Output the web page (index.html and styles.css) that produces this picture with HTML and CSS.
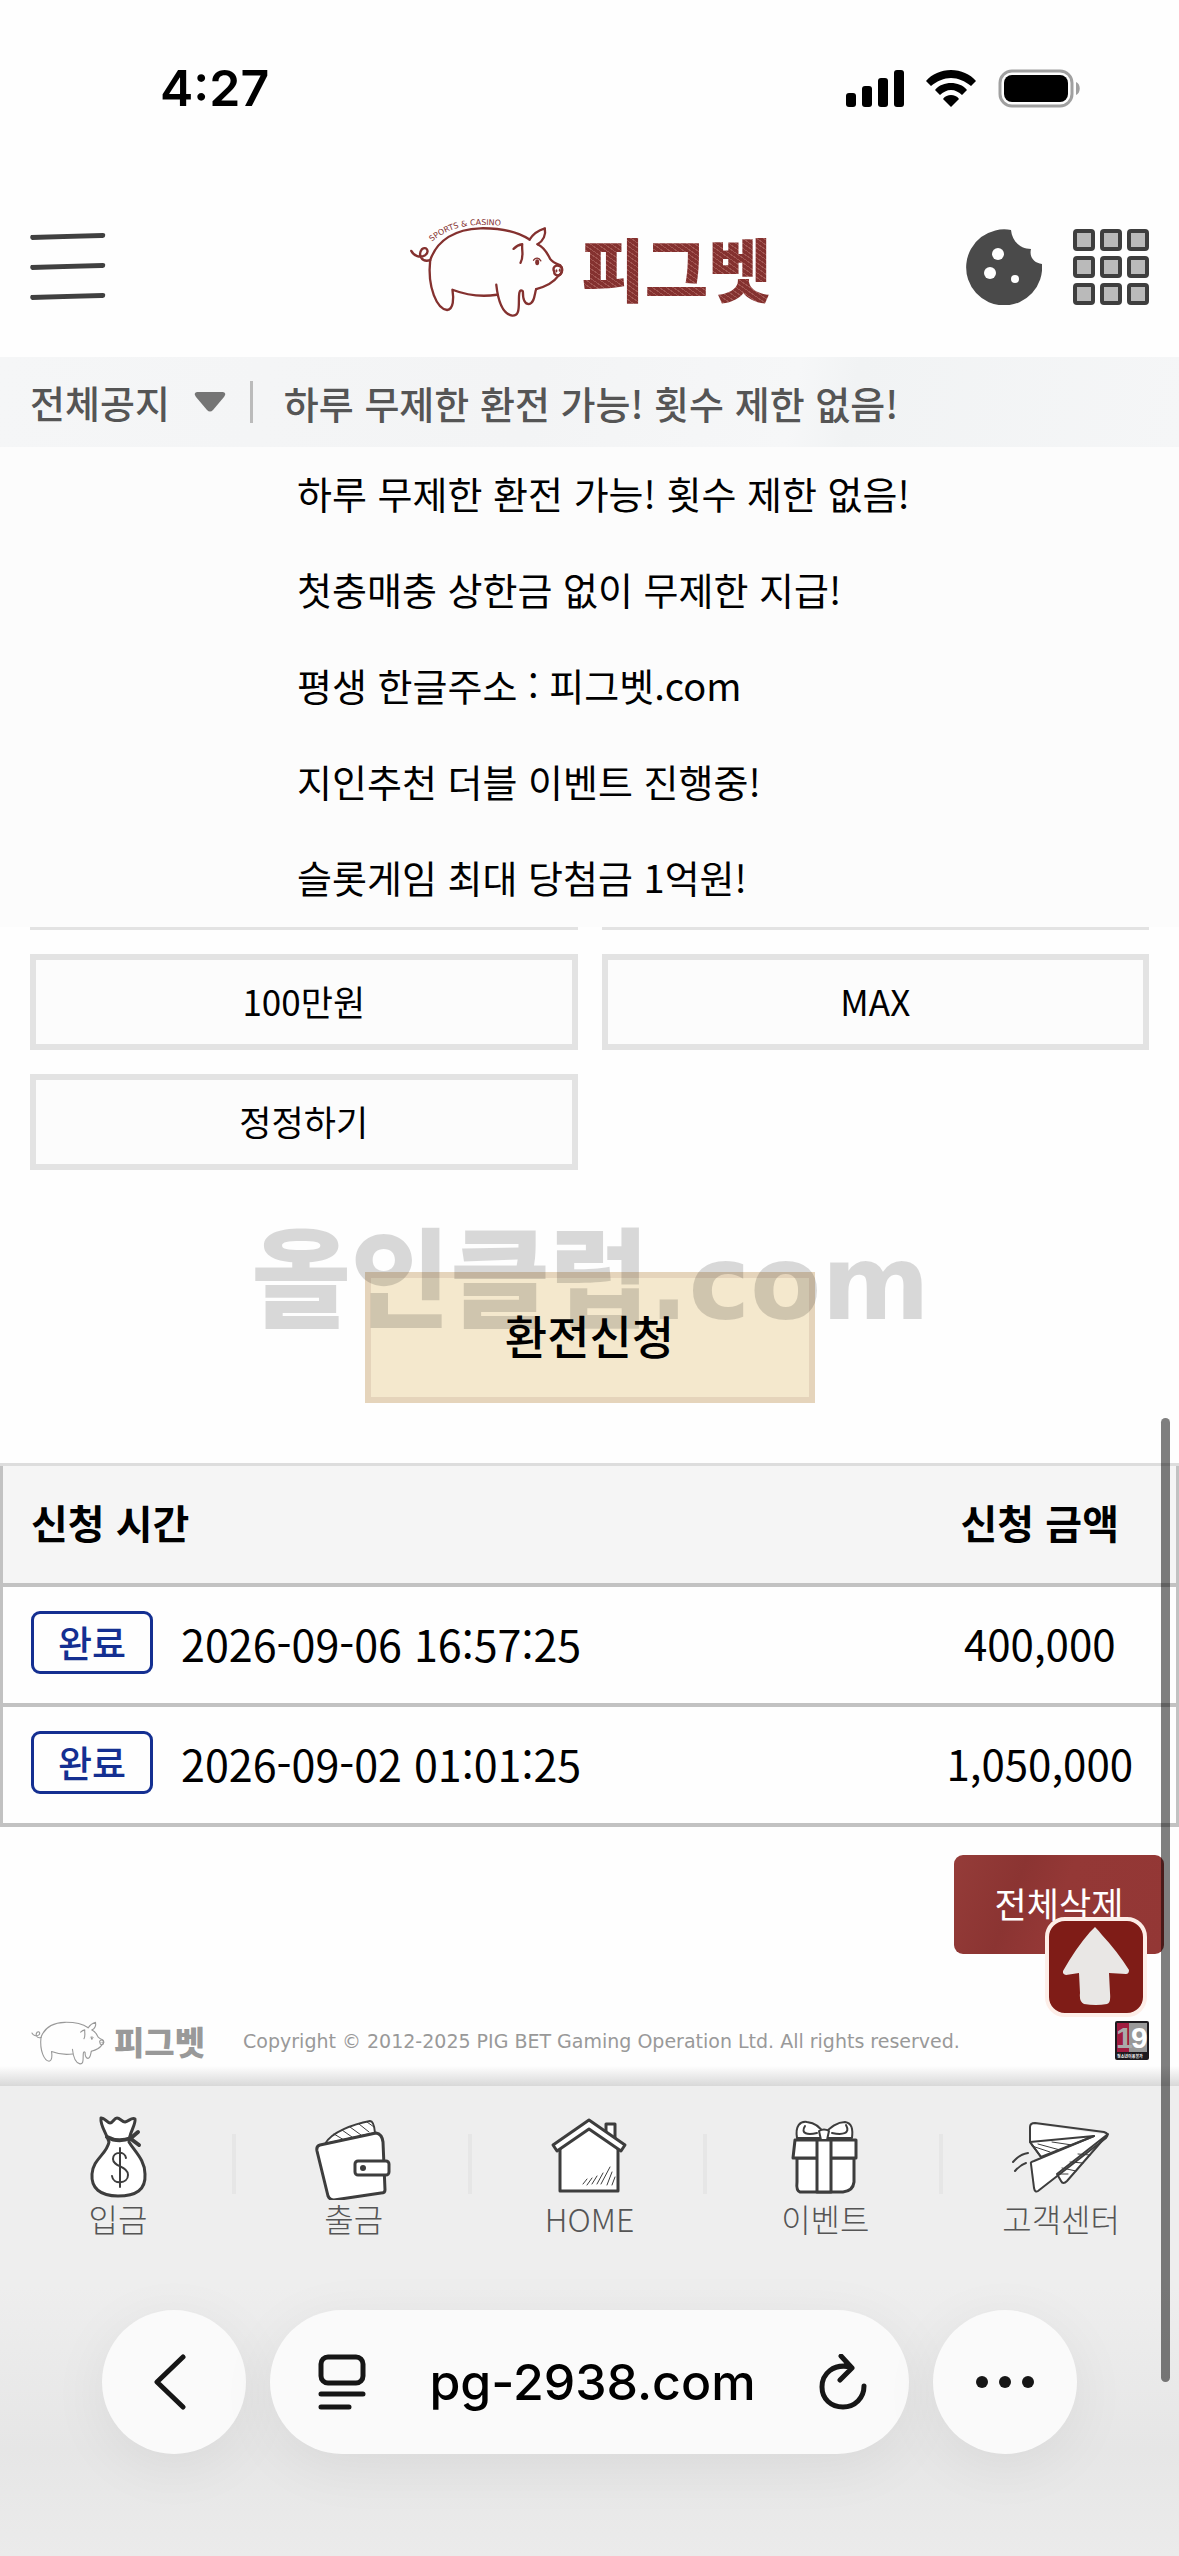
FILE: index.html
```html
<!DOCTYPE html>
<html lang="ko">
<head>
<meta charset="UTF-8" />
<meta name="viewport" content="width=device-width, initial-scale=1" />
<title>피그벳 - 환전신청</title>
<link rel="stylesheet" href="styles.css">
</head>
<body>

<svg class="sprite" aria-hidden="true">
  <symbol id="pig" viewBox="50 40 480 310">
    <g fill="none" stroke="currentColor" stroke-width="7" stroke-linecap="round" stroke-linejoin="round">
      <path d="M119 176C140 115 195 82 270 80C330 79 385 92 418 114" />
      <path d="M418 114C428 98 444 86 464 80C468 99 460 118 442 128" />
      <path d="M442 128C466 139 472 158 480 172C488 183 500 187 510 191C519 199 518 215 504 224C492 241 468 255 438 263" />
      <path d="M438 263C433 275 434 306 416 308C402 308 398 292 398 270C386 258 386 282 386 300C386 328 384 344 366 343C340 338 324 305 318 250" />
      <path d="M320 280C280 286 230 282 186 265C190 290 190 324 170 326C140 322 110 260 119 176" />
      <path d="M119 176C92 184 82 158 94 143C108 132 118 150 104 161C88 170 70 164 62 148" />
      <path d="M370 142C380 132 388 129 396 128C394 150 402 162 391 184" />
      <path d="M492 210C486 198 496 189 506 193C521 196 519 220 502 222C495 221 492 215 492 210Z" />
      <path d="M430 176C437 167 446 168 452 178" stroke-width="4" />
    </g>
    <g fill="currentColor">
      <ellipse cx="441" cy="182" rx="6" ry="9" />
      <ellipse cx="499" cy="208" rx="3" ry="5" />
      <ellipse cx="509" cy="206" rx="3" ry="5" />
    </g>
  </symbol>
</svg>

<div class="status-bar">
  <time class="clock">4:27</time>
  <div class="status-icons">
    <svg width="58" height="37" viewBox="0 0 58 37">
      <rect x="0" y="23" width="10" height="14" rx="3" />
      <rect x="16" y="16" width="10" height="21" rx="3" />
      <rect x="32" y="8" width="10" height="29" rx="3" />
      <rect x="48" y="0" width="10" height="37" rx="3" />
    </svg>
    <svg width="50" height="37" viewBox="0 0 50 37">
      <path d="M25 0C35 0 44 4 50 11L45 16C39 11 32 8 25 8S11 11 5 16L0 11C6 4 15 0 25 0Z" />
      <path d="M25 13C31 13 37 15 41 20L36 25C33 22 29 20 25 20S17 22 14 25L9 20C13 15 19 13 25 13Z" />
      <path d="M25 25C28 25 31 26 33 29L25 37L17 29C19 26 22 25 25 25Z" />
    </svg>
    <svg width="83" height="39" viewBox="0 0 83 39">
      <rect x="2" y="2" width="72" height="35" rx="12" fill="none" stroke="#a0a0a0" stroke-width="3" />
      <rect x="6" y="6" width="64" height="27" rx="8" />
      <path d="M78 13C83 15 83 24 78 26Z" fill="#a0a0a0" />
    </svg>
  </div>
</div>

<header class="site-header">
  <button type="button" class="icon-btn" aria-label="메뉴">
    <svg width="76" height="69" viewBox="0 0 76 69" fill="#404040">
      <path d="M1 3Q38 2 73 1Q76 1 75 4Q75 6 71 6Q30 7 2 8Q-1 6 1 3Z" />
      <path d="M1 33Q38 32 73 31Q76 31 75 34Q75 36 71 36Q30 37 2 38Q-1 36 1 33Z" />
      <path d="M1 63Q38 62 73 61Q76 61 75 64Q75 66 71 66Q30 67 2 68Q-1 66 1 63Z" />
    </svg>
  </button>
  <a href="#" class="logo">
    <svg class="logo-pig" viewBox="50 40 480 310">
      <use href="#pig" x="50" y="40" width="480" height="310" />
      <path id="pig-back" fill="none" d="M124 121C170 82 220 70 275 70C300 70 330 71 370 76" />
      <text class="pig-caption"><textPath href="#pig-back">SPORTS &amp; CASINO</textPath></text>
    </svg>
    <span class="logo-text">피그벳</span>
  </a>
  <div class="header-right">
    <button type="button" class="icon-btn" aria-label="쿠키">
      <svg width="76" height="76" viewBox="0 0 76 76">
        <path fill="#4a4a4a" d="M45 1C46 12 54 20 65 20C63 28 68 34 76 35A38 38 0 1 1 45 1Z" />
        <g fill="#fff"><circle cx="32" cy="25" r="6" /><circle cx="24" cy="44" r="6" /><circle cx="49" cy="50" r="4" /></g>
      </svg>
    </button>
    <button type="button" class="icon-btn" aria-label="전체 메뉴">
      <svg width="76" height="76" viewBox="0 0 76 76" fill="#bababa" stroke="#3e3e3e" stroke-width="4">
        <rect x="2" y="2" width="18" height="18" rx="2" /><rect x="29" y="2" width="18" height="18" rx="2" /><rect x="56" y="2" width="18" height="18" rx="2" />
        <rect x="2" y="29" width="18" height="18" rx="2" /><rect x="29" y="29" width="18" height="18" rx="2" /><rect x="56" y="29" width="18" height="18" rx="2" />
        <rect x="2" y="56" width="18" height="18" rx="2" /><rect x="29" y="56" width="18" height="18" rx="2" /><rect x="56" y="56" width="18" height="18" rx="2" />
      </svg>
    </button>
  </div>
</header>

<section class="notice-bar">
  <button type="button" class="notice-toggle">
    전체공지
    <svg width="32" height="20" viewBox="0 0 32 20"><path fill="#757575" d="M3 0H29Q33 1 30 5L19 18Q16 21 13 18L2 5Q-1 1 3 0Z" /></svg>
  </button>
  <span class="notice-title">하루 무제한 환전 가능! 횟수 제한 없음!</span>
</section>

<ul class="notice-list">
  <li><a href="#">하루 무제한 환전 가능! 횟수 제한 없음!</a></li>
  <li><a href="#">첫충매충 상한금 없이 무제한 지급!</a></li>
  <li><a href="#">평생 한글주소 : 피그벳.com</a></li>
  <li><a href="#">지인추천 더블 이벤트 진행중!</a></li>
  <li><a href="#">슬롯게임 최대 당첨금 1억원!</a></li>
</ul>

<main>
  <form class="exchange-form">
    <div class="amount-grid">
      <div class="amount-edge"></div>
      <div class="amount-edge"></div>
      <button type="button" class="amount-btn">100만원</button>
      <button type="button" class="amount-btn">MAX</button>
      <button type="button" class="amount-btn">정정하기</button>
    </div>
    <div class="submit-row">
      <button type="button" class="submit-btn"><span>환전신청</span></button>
      <div class="watermark">올인클럽<span>.com</span></div>
    </div>
  </form>

  <table class="history">
    <thead>
      <tr><th>신청 시간</th><th class="amount">신청 금액</th></tr>
    </thead>
    <tbody>
      <tr>
        <td><div class="when"><span class="badge">완료</span>2026-09-06 16:57:25</div></td>
        <td class="amount">400,000</td>
      </tr>
      <tr>
        <td><div class="when"><span class="badge">완료</span>2026-09-02 01:01:25</div></td>
        <td class="amount">1,050,000</td>
      </tr>
    </tbody>
  </table>

  <div class="actions">
    <button type="button" class="delete-btn">전체삭제</button>
    <a href="#" class="top-btn" aria-label="맨 위로">
      <svg width="66" height="80" viewBox="0 0 66 80"><path fill="#e9e7e5" d="M32 0Q36 4 39 8Q54 24 66 43Q66 47 63 47L46 46L47 66Q48 76 44 77Q33 79 21 77Q16 75 17 66L16 46L3 48Q-1 47 0 44Q13 21 27 5Z" /></svg>
    </a>
  </div>
</main>

<footer class="site-footer">
  <div class="logo-small">
    <svg class="small-pig"><use href="#pig" /></svg>
    <span>피그벳</span>
  </div>
  <small class="copyright">Copyright © 2012-2025 PIG BET Gaming Operation Ltd. All rights reserved.</small>
  <svg class="adult-mark" width="34" height="39" viewBox="0 0 34 39">
    <rect width="34" height="39" rx="2" fill="#1d1a1e" />
    <rect x="2" y="2" width="15" height="29" fill="#a01c40" />
    <rect x="14" y="2" width="18" height="29" fill="#999" />
    <text class="adult-num" x="1" y="27" fill="#aaa">1</text>
    <text class="adult-num" x="16" y="27" fill="#fff">9</text>
    <text class="adult-note" x="2" y="37" fill="#fff">청소년이용불가</text>
  </svg>
</footer>

<nav class="tab-bar">
  <a href="#">
    <svg width="80" height="86" viewBox="0 0 80 86">
      <path d="M31 28C28 18 22 12 23 4C26 3 29 9 32 9C35 9 36 4 39 4C42 4 44 8 47 8C51 7 54 3 57 5C58 11 51 19 51 28C57 38 67 46 67 60C68 76 58 82 40 82C22 82 13 74 14 60C15 45 29 40 31 28Z" />
      <path fill="none" stroke-width="4" d="M29 23Q40 29 53 24L60 18M53 25L61 31" />
      <path fill="none" stroke-width="2" d="M48 44C47 37 35 37 35 45C35 53 50 52 50 61C50 70 35 71 34 62M42 34V73" />
    </svg>
    <span>입금</span>
  </a>
  <a href="#">
    <svg width="80" height="86" viewBox="0 0 80 86">
      <path stroke-width="2" d="M11 30C17 18 40 10 56 7Q60 7 61 19Z" />
      <path fill="none" stroke-width="1" d="M20 20L30 26M28 16L38 23M36 13L47 21M45 10L55 18M53 8L60 13" />
      <path d="M6 31L62 19Q68 20 69 28L71 76Q71 79 67 79L20 86Q16 86 14 82L3 37Q2 32 6 31Z" />
      <rect x="41" y="47" width="34" height="14" rx="3" />
      <circle cx="49" cy="54" r="3" fill="#3d3d3d" stroke="none" />
    </svg>
    <span>출금</span>
  </a>
  <a href="#">
    <svg width="80" height="86" viewBox="0 0 80 86">
      <path d="M57 22V10H66V30Z" />
      <path d="M11 33V77H69V33L40 12Z" />
      <path d="M40 6L4 31L8 37L40 15L72 37L76 31Z" />
      <path fill="none" stroke-width="1" d="M34 70L38 65M38 71L43 64M43 70L48 62M48 70L54 59M52 70L61 53M58 71L63 58M63 71L66 63" />
    </svg>
    <span>HOME</span>
  </a>
  <a href="#">
    <svg width="80" height="86" viewBox="0 0 80 86">
      <path stroke-width="2" d="M12 24C10 12 15 7 22 8C31 9 36 14 39 20C46 13 52 8 60 8C67 9 68 15 67 24Z" />
      <path fill="none" stroke-width="2" d="M20 12C15 20 23 21 32 19M61 11C66 20 57 21 47 19" />
      <path d="M12 44H69V68Q68 77 58 78H15Q11 77 12 68Z" />
      <path d="M10 26H71V44H8Z" />
      <path d="M32 26H46V78H32Z" />
      <path stroke-width="2" d="M34 17Q39 14 44 17L42 26H36Z" />
    </svg>
    <span>이벤트</span>
  </a>
  <a href="#">
    <svg class="plane" width="98" height="86" viewBox="0 0 98 86">
      <path d="M20 10L96 21L24 78L19 48L29 44L18 28L18 12Q18 8 20 10Z" stroke="none" />
      <path stroke-width="2" d="M18 28L82 22L29 43Z" />
      <path stroke-width="2" d="M45 60L96 20L55 67Q51 71 49 67Z" />
      <path fill="none" stroke-width="2" d="M18 28V13Q18 9 23 9L92 18Q98 20 94 24L26 77Q23 79 22 74L19 50Q18 48 22 47L82 22M18 28L29 43" />
      <path fill="none" stroke-width="1" d="M20 32L38 38M26 30L48 36M40 28L60 31M48 60L56 60M50 54L64 57M58 48L71 49M66 40L78 41" />
      <path fill="none" stroke-width="2" d="M1 48Q8 40 16 39M3 57Q8 51 14 49" />
    </svg>
    <span>고객센터</span>
  </a>
</nav>

<div class="browser-bar">
  <button type="button" class="round-btn" aria-label="뒤로">
    <svg width="44" height="56" viewBox="0 0 44 56"><path d="M31 3L5 28L31 53" /></svg>
  </button>
  <div class="address">
    <svg width="48" height="56" viewBox="0 0 48 56"><rect x="3" y="3" width="42" height="26" rx="7" /><path d="M3 40H45M3 53H31" /></svg>
    <span>pg-2938.com</span>
    <button type="button" class="icon-btn" aria-label="새로고침">
      <svg width="48" height="56" viewBox="0 0 48 56"><path d="M22 2L33 14L21 26M32 13C14 9 3 20 3 33C3 45 12 53 24 53C36 53 45 44 45 32" /></svg>
    </button>
  </div>
  <button type="button" class="round-btn" aria-label="더보기">
    <svg class="dots" width="60" height="12" viewBox="0 0 60 12"><circle cx="7" cy="6" r="6" /><circle cx="30" cy="6" r="6" /><circle cx="53" cy="6" r="6" /></svg>
  </button>
</div>

<div class="scroll-thumb"></div>

</body>
</html>
```
FILE: styles.css
```css
:root {
  --edge: #e3e3e3;
  --red: #84312f;
  --gray-dark: #3d3d3d;
  --blue: #142f91;
}
* {
  box-sizing: border-box;
}
body {
  margin: 0;
  min-height: 100vh;
  display: flex;
  flex-direction: column;
  position: relative;
  background: #fefefe;
  color: #000;
  font-family: "Noto Sans CJK KR", sans-serif;
  font-size: 40px;
}
a {
  color: inherit;
  text-decoration: none;
}
button {
  font-family: inherit;
  color: inherit;
  cursor: pointer;
}
svg {
  display: block;
  flex-shrink: 0;
}
.sprite {
  position: absolute;
  width: 0;
  height: 0;
}

/* status bar */
.status-bar {
  height: 176px;
  padding: 0 98px 0 160px;
  display: flex;
  align-items: center;
  justify-content: space-between;
}
.clock {
  font-family: Inter, sans-serif;
  font-size: 50px;
  font-weight: 600;
}
.status-icons {
  display: flex;
  align-items: center;
  gap: 22px;
}

/* header */
.site-header {
  height: 181px;
  padding: 0 30px;
  display: grid;
  grid-template-columns: 1fr auto 1fr;
  align-items: center;
}
.icon-btn {
  padding: 0;
  border: none;
  background: none;
}
.logo {
  display: flex;
  align-items: center;
  gap: 14px;
  color: var(--red);
}
.logo-pig {
  width: 160px;
  height: 103px;
}
.pig-caption {
  font-family: "DejaVu Sans", sans-serif;
  font-size: 24px;
  fill: currentColor;
}
.logo-text {
  font-size: 69px;
  line-height: 96px;
  font-weight: 900;
  color: transparent;
  background: repeating-linear-gradient(35deg, #84312f 0 3px, #a05551 3px 4px);
  background-clip: text;
}
.header-right {
  display: flex;
  justify-content: flex-end;
  gap: 31px;
}

/* notices */
.notice-bar {
  height: 90px;
  padding: 0 30px;
  display: flex;
  align-items: center;
  color: #555;
  background: linear-gradient(100deg, #f5f6f7, #f3f4f5 45%, #f6f7f8 67%, #f1f3f4 72%, #f5f6f7);
}
.notice-toggle {
  display: flex;
  align-items: center;
  gap: 24px;
  padding: 0 24px 0 0;
  border: none;
  border-right: 3px solid #bbb;
  background: none;
  font-size: 38px;
  line-height: 42px;
  font-weight: 500;
}
.notice-title {
  padding-left: 31px;
  font-size: 38px;
  font-weight: 500;
}
.notice-list {
  margin: 0;
  padding: 0 30px 0 297px;
  list-style: none;
  background: #fcfcfc;
}
.notice-list li {
  height: 96px;
  font-size: 38px;
  line-height: 92px;
}

/* exchange form */
.amount-grid {
  display: grid;
  grid-template-columns: 1fr 1fr;
  gap: 24px;
  padding: 0 30px;
}
.amount-edge {
  height: 3px;
  background: var(--edge);
}
.amount-btn {
  height: 96px;
  padding: 0 0 4px;
  border: 6px solid var(--edge);
  background: #fcfcfc;
  font-size: 35px;
}
.submit-row {
  position: relative;
  display: flex;
  justify-content: center;
  margin: 102px 0 60px;
}
.submit-btn {
  width: 450px;
  height: 131px;
  padding: 0 0 8px;
  border: 6px solid #e5d4bb;
  background: #f4e8cd;
  font-size: 46px;
  font-weight: 500;
}
.submit-btn span {
  position: relative;
  z-index: 2;
}
.watermark {
  position: absolute;
  z-index: 1;
  left: 50%;
  bottom: 50px;
  margin-left: -338px;
  font-size: 108px;
  line-height: 140px;
  font-weight: 900;
  white-space: nowrap;
  color: rgba(0, 0, 0, 0.15);
  pointer-events: none;
}
.watermark span {
  font-family: "DejaVu Sans", sans-serif;
  font-size: 104px;
  font-weight: 700;
}

/* history table */
.history {
  width: 100%;
  border-collapse: collapse;
  border: 3px solid #c2c2c2;
}
.history th,
.history td {
  height: 120px;
  padding: 0 28px 4px;
  border-bottom: 4px solid #c2c2c2;
  text-align: left;
  font-weight: 400;
}
.history th {
  background: #f5f5f5;
  border-top: 3px solid #ddd;
  font-weight: 700;
}
.history .amount {
  width: 274px;
  padding: 0 0 4px;
  text-align: center;
}
.history td {
  font-size: 42px;
}
.history .when {
  display: flex;
  align-items: center;
  gap: 28px;
  font-size: 43px;
}
.badge {
  padding: 0 24px;
  border: 3px solid var(--blue);
  border-radius: 9px;
  color: var(--blue);
  font-size: 37px;
  line-height: 57px;
  font-weight: 500;
}
.actions {
  position: relative;
  padding: 28px 15px 0;
  display: flex;
  justify-content: flex-end;
}
.delete-btn {
  width: 210px;
  height: 99px;
  padding: 0 0 4px;
  border: none;
  border-radius: 9px;
  background: linear-gradient(110deg, #953c39, #8b3432 30%, #943836 50%, #933735);
  color: #fff;
  font-size: 35px;
}
.top-btn {
  position: absolute;
  right: 32px;
  top: 90px;
  width: 102px;
  height: 100px;
  display: flex;
  align-items: center;
  justify-content: center;
  border: 4px solid #fdeee8;
  border-radius: 20px;
  background: #7f1c17;
}

/* footer */
.site-footer {
  margin-top: 48px;
  height: 84px;
  padding: 0 30px 6px;
  display: flex;
  align-items: center;
  color: #999;
  background: linear-gradient(transparent 64px, #d8d8d8);
}
.logo-small {
  display: flex;
  align-items: center;
  gap: 8px;
  font-size: 33px;
  line-height: 48px;
  font-weight: 900;
}
.small-pig {
  width: 76px;
  height: 49px;
}
.copyright {
  flex: 1;
  padding-left: 38px;
  font-family: "DejaVu Sans", sans-serif;
  font-size: 19px;
}
.adult-num {
  font-family: "Liberation Sans", sans-serif;
  font-size: 30px;
  font-weight: 700;
}
.adult-note {
  font-size: 4px;
  font-weight: 700;
}

/* bottom tabs */
.tab-bar {
  display: grid;
  grid-template-columns: repeat(5, 1fr);
  height: 200px;
  padding-top: 28px;
  background: #eee;
  color: #555;
}
.tab-bar a {
  display: flex;
  flex-direction: column;
  align-items: center;
  font-size: 32px;
  line-height: 36px;
  font-weight: 300;
  background: linear-gradient(#e6e6e6, #e6e6e6) right 20px / 4px 60px no-repeat;
}
.tab-bar a:last-child {
  background: none;
}
.tab-bar svg {
  fill: #fff;
  stroke: var(--gray-dark);
  stroke-width: 3;
  stroke-linejoin: round;
  stroke-linecap: round;
}

/* browser toolbar */
.browser-bar {
  flex: 1;
  display: flex;
  align-items: flex-start;
  gap: 24px;
  padding: 24px 102px 102px;
  background: linear-gradient(#eee, #e6e6e6 60%, #ebebeb);
}
.round-btn,
.address {
  height: 144px;
  border: none;
  border-radius: 72px;
  background: #fafafa;
  box-shadow: 0 12px 60px rgba(0, 0, 0, 0.06);
  display: flex;
  align-items: center;
  justify-content: center;
}
.round-btn {
  width: 144px;
  padding: 0;
}
.address {
  flex: 1;
  justify-content: space-between;
  padding: 0 42px 0 48px;
  font-family: Inter, sans-serif;
  font-size: 50px;
  font-weight: 500;
}
.browser-bar svg {
  fill: none;
  stroke: #161616;
  stroke-width: 5;
  stroke-linecap: round;
  stroke-linejoin: round;
}
.browser-bar .dots {
  fill: #161616;
  stroke: none;
}
.scroll-thumb {
  position: absolute;
  z-index: 3;
  right: 9px;
  top: 1418px;
  width: 9px;
  height: 964px;
  border-radius: 5px;
  background: rgba(0, 0, 0, 0.5);
}
```
